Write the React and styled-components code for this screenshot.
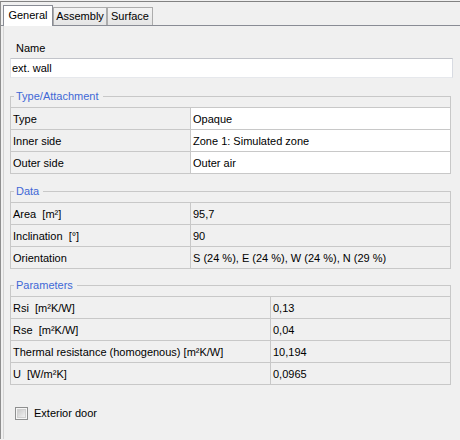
import React from "react";
import styled, { createGlobalStyle } from "styled-components";

const Global = createGlobalStyle`
  html, body { margin: 0; padding: 0; background: #f0f0f0; }
  body {
    font-family: "Liberation Sans", Arial, sans-serif;
    font-size: 11px;
    color: #000;
  }
`;

const Window = styled.div`
  margin-top: 1px;
  border-top: 1px solid #828282;
  border-left: 1px solid #8e8e8e;
  min-height: 438px;
  box-sizing: border-box;
  display: flex;
  flex-direction: column;
`;

const TabStrip = styled.div`
  display: flex;
  align-items: flex-end;
  height: 23px;
  padding-left: 2px;
  border-bottom: 1px solid #898c95;
`;

const Tab = styled.div`
  box-sizing: border-box;
  width: ${(p) => p.$w}px;
  height: ${(p) => (p.$active ? 21 : 18)}px;
  margin-bottom: ${(p) => (p.$active ? -1 : 0)}px;
  position: relative;
  z-index: ${(p) => (p.$active ? 1 : 0)};
  border: 1px solid ${(p) => (p.$active ? "#898c95" : "#acacac")};
  border-bottom: none;
  background: ${(p) =>
    p.$active ? "#ffffff" : "linear-gradient(#f3f3f3, #e5e5e5)"};
  display: flex;
  align-items: center;
  justify-content: center;
  padding-bottom: ${(p) => (p.$active ? 1 : 0)}px;
  line-height: 13px;
`;

const Panel = styled.div`
  flex: 1;
  margin-left: 2px;
  border-left: 1px solid #d4d4d4;
  padding: 16px 9px 0 6px;
  display: flex;
  flex-direction: column;
`;

const FieldLabel = styled.label`
  display: block;
  line-height: 13px;
  margin-left: 6px;
`;

const TextInput = styled.input`
  box-sizing: border-box;
  display: block;
  width: calc(100% + 2px);
  height: 20px;
  margin: 3px 0 0 0;
  padding: 0 0 0 1px;
  font: inherit;
  color: #000;
  background: #fff;
  border: 1px solid;
  border-color: #c2c4ca #d8dbe2 #e6e8ec #dfe2e8;
  outline: none;
`;

const Group = styled.fieldset`
  margin: ${(p) => p.$mt}px 0 0 0;
  padding: 4px 0 0 0;
  min-width: 0;
  border: 1px solid #c8c8c8;
  border-bottom: none;
`;

const Legend = styled.legend`
  margin-left: 3px;
  padding: 0 4px 0 2px;
  line-height: 13px;
  color: #3f68d6;
`;

const Table = styled.div`
  border-bottom: 1px solid #c8c8c8;
`;

const Row = styled.div`
  box-sizing: border-box;
  height: 22px;
  border-top: 1px solid #c8c8c8;
  display: grid;
  grid-template-columns: ${(p) => p.$lw}px 1fr;
`;

const LabelCell = styled.div`
  box-sizing: border-box;
  border-right: 1px solid #c8c8c8;
  padding-left: 2px;
  display: flex;
  align-items: center;
  white-space: pre;
`;

const ValueCell = styled.div`
  padding-left: 2px;
  display: flex;
  align-items: center;
  white-space: pre;
  background: ${(p) => (p.$white ? "#ffffff" : "transparent")};
`;

const CheckRow = styled.label`
  margin-top: 22px;
  margin-left: 5px;
  display: flex;
  align-items: center;
  gap: 6px;
  height: 13px;
  line-height: 13px;
`;

const CheckBox = styled.span`
  box-sizing: border-box;
  width: 13px;
  height: 13px;
  border: 1px solid #8e8f8f;
  background: #f4f4f4;
  box-shadow: inset 0 0 0 1px #f6f6f6;
  display: flex;
  align-items: center;
  justify-content: center;
  &::after {
    content: "";
    width: 7px;
    height: 7px;
    background: linear-gradient(135deg, #cbcbcb, #f0f0f0);
    border: 1px solid #d0d0d0;
  }
`;

const groups = [
  {
    title: "Type/Attachment",
    lw: 180,
    mt: 12,
    white: true,
    rows: [
      ["Type", "Opaque"],
      ["Inner side", "Zone 1: Simulated zone"],
      ["Outer side", "Outer air"],
    ],
  },
  {
    title: "Data",
    lw: 180,
    mt: 11,
    rows: [
      ["Area  [m²]", "95,7"],
      ["Inclination  [°]", "90"],
      ["Orientation", "S (24 %), E (24 %), W (24 %), N (29 %)"],
    ],
  },
  {
    title: "Parameters",
    lw: 260,
    mt: 10,
    rows: [
      ["Rsi  [m²K/W]", "0,13"],
      ["Rse  [m²K/W]", "0,04"],
      ["Thermal resistance (homogenous) [m²K/W]", "10,194"],
      ["U  [W/m²K]", "0,0965"],
    ],
  },
];

export default function App() {
  return (
    <>
      <Global />
      <Window>
        <TabStrip>
          <Tab $active $w={50}>General</Tab>
          <Tab $w={54}>Assembly</Tab>
          <Tab $w={46}>Surface</Tab>
        </TabStrip>
        <Panel>
          <FieldLabel>Name</FieldLabel>
          <TextInput defaultValue="ext. wall" />
          {groups.map((g) => (
            <Group key={g.title} $mt={g.mt}>
              <Legend>{g.title}</Legend>
              <Table>
                {g.rows.map(([l, v]) => (
                  <Row key={l} $lw={g.lw}>
                    <LabelCell>{l}</LabelCell>
                    <ValueCell $white={g.white}>{v}</ValueCell>
                  </Row>
                ))}
              </Table>
            </Group>
          ))}
          <CheckRow>
            <CheckBox />
            <span>Exterior door</span>
          </CheckRow>
        </Panel>
      </Window>
    </>
  );
}
